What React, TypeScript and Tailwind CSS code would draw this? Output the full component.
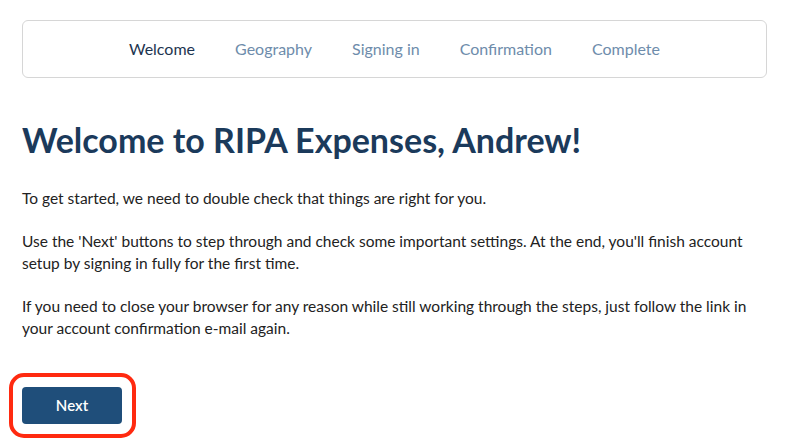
const steps = ["Welcome", "Geography", "Signing in", "Confirmation", "Complete"]

export default function App() {
  return (
    <div className="min-h-screen bg-white px-[22px] pt-[20px] font-['Lato','Noto_Sans',sans-serif] text-[#222]">
      <nav className="flex h-[58px] items-center justify-center gap-[40px] rounded-[6px] border border-[#d6d6d6]">
        {steps.map((s, i) => (
          <span
            key={s}
            className={`text-[16px] ${i === 0 ? "text-[#1d3450]" : "text-[#6e8cab]"}`}
          >
            {s}
          </span>
        ))}
      </nav>

      <h1 className="mt-[42px] text-[34px] font-bold leading-[40px] text-[#1b3a5b]">
        Welcome to RIPA Expenses, Andrew!
      </h1>

      <div className="mt-[27px] flex flex-col gap-[21px] text-[15.5px] leading-[22px]">
        <p>To get started, we need to double check that things are right for you.</p>
        <p>
          Use the 'Next' buttons to step through and check some important settings. At the end, you'll finish account
          setup by signing in fully for the first time.
        </p>
        <p>
          If you need to close your browser for any reason while still working through the steps, just follow the link in
          your account confirmation e-mail again.
        </p>
      </div>

      <div className="mt-[34px] ml-[-13px] inline-flex rounded-[15px] border-[4px] border-[#ff2a10] p-[10px] pl-[9px]">
        <button className="h-[37px] w-[100px] rounded-[4px] bg-[#1f4e7a] text-[15px] font-semibold text-white">
          Next
        </button>
      </div>
    </div>
  )
}
